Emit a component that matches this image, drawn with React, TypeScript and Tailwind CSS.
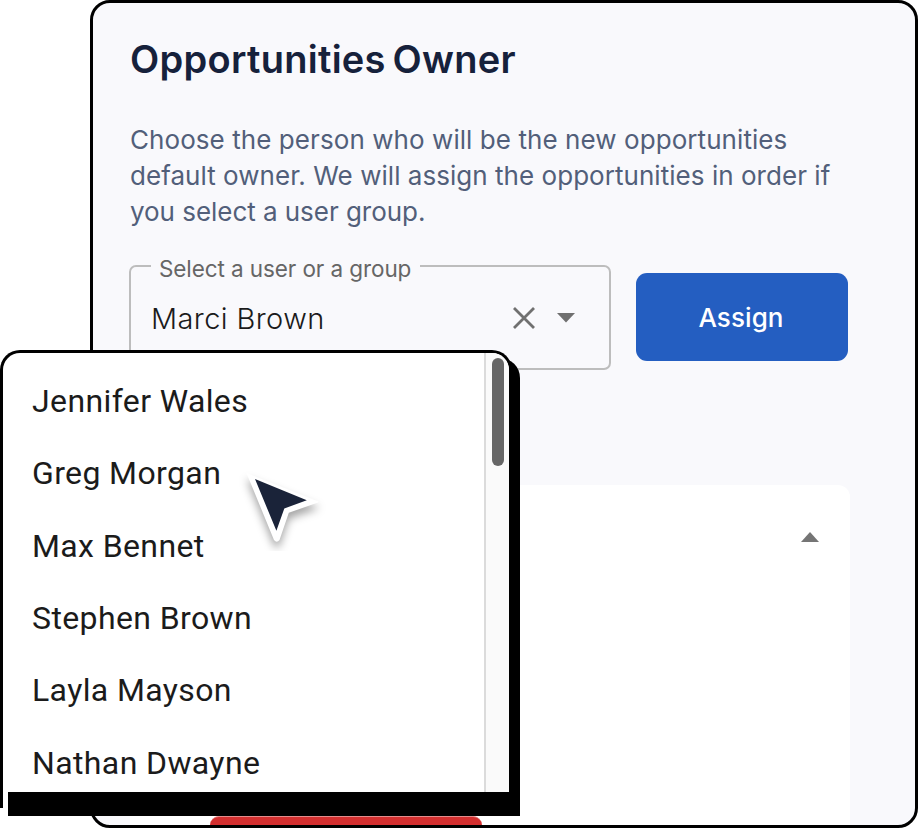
const people = [
  "Jennifer Wales",
  "Greg Morgan",
  "Max Bennet",
  "Stephen Brown",
  "Layla Mayson",
  "Nathan Dwayne",
];

function SelectField() {
  return (
    <fieldset className="-mt-[11px] h-[116px] w-[482px] min-w-0 rounded-[7px] border-2 border-[#bdbdbd] pl-[20px]">
      <legend className="h-[24px] w-[269px] pl-[8px] text-[22.5px] leading-[24px] whitespace-nowrap text-[#666666]">
        <span className="inline-block pt-[3px] tracking-[-0.09px]">Select a user or a group</span>
      </legend>
      <div className="mt-[10px] flex h-[60px] items-center">
        <span className="w-[362px] pt-[1px] text-[29px] leading-[36px] font-light tracking-[0.4px] text-[#1b1b1b]">
          Marci Brown
        </span>
        <svg className="h-[22px] w-[22px]" viewBox="0 0 22 22" fill="none" stroke="#707070" strokeWidth="2.8">
          <path d="M1 1 21 21M21 1 1 21" />
        </svg>
        <svg className="ml-[22px] h-[10px] w-[18px]" viewBox="0 0 18 10" fill="#707070">
          <path d="M0 0H18L9 9.5Z" />
        </svg>
      </div>
    </fieldset>
  );
}

function Cursor() {
  return (
    <svg className="absolute top-[462px] left-[236px] h-[89px] w-[96px]" viewBox="236 462 96 89">
      <path
        className="drop-shadow-[0_6px_4px_rgba(0,0,0,0.35)]"
        d="M246.500 473 318.500 501.500Q319 502 318 502.500L288.800 512.700 279.500 540Q276.700 543.500 274 540Z"
        fill="#fff"
      />
      <path d="M255 479 306.800 500.300 284.300 508.500 276.400 530.800Z" fill="#1a2339" />
    </svg>
  );
}

function Dropdown() {
  return (
    <div className="absolute top-[350px] left-0 h-[466px] w-[520px]">
      <div className="absolute top-[8px] left-[8px] h-[458px] w-[512px] rounded-tr-[20px] bg-black" />
      <div className="absolute top-0 left-0 flex h-[458px] w-[512px] overflow-hidden rounded-t-[20px] border-x-[3px] border-t-[3px] border-black bg-white">
        <ul className="flex w-[481px] flex-col pt-[12px] pl-[29px] font-[Roboto,sans-serif] text-[32px] tracking-[0.38px] text-[#1b1b1b]">
          {people.map((name) => (
            <li key={name} className="h-[72.35px] shrink-0 leading-[72px] whitespace-nowrap">
              {name}
            </li>
          ))}
        </ul>
        <div className="flex flex-1 justify-center border-l-2 border-[#dbdbdb] bg-[#fafafa] pt-[5px] pl-[1px]">
          <div className="h-[108px] w-[12px] rounded-full bg-[#666666]" />
        </div>
      </div>
      <div className="absolute bottom-0 left-[8px] h-[24px] w-[512px] bg-black" />
    </div>
  );
}

export default function App() {
  return (
    <div className="relative flex h-[828px] w-[918px] overflow-hidden bg-white pl-[90px] font-[Inter,sans-serif]">
      <main className="flex h-[828px] w-[828px] flex-col overflow-hidden rounded-[20px] border-[3px] border-black bg-[#f9f9fc] pl-[37px]">
        <h1 className="mt-[32px] h-[48px] text-[38px] leading-[48px] font-semibold tracking-[0.28px] [word-spacing:-3px] whitespace-nowrap text-[#16213b]">
          Opportunities Owner
        </h1>
        <p className="mt-[39px] text-[26px] leading-[36px] whitespace-nowrap text-[#525f7a]">
          <span className="block tracking-[0.07px]">Choose the person who will be the new opportunities</span>
          <span className="block tracking-[0.04px]">default owner. We will assign the opportunities in order if</span>
          <span className="block tracking-[-0.04px]">you select a user group.</span>
        </p>
        <div className="-ml-[1px] mt-[35px] flex items-start">
          <SelectField />
          <button className="mt-[8px] ml-[25px] h-[88px] w-[212px] rounded-[11px] bg-[#245ec1] pr-[2px] text-[26px] font-medium tracking-[0.1px] text-white">
            Assign
          </button>
        </div>
        <section className="mt-[115px] flex h-[340px] w-[720px] shrink-0 flex-col rounded-t-[12px] bg-white">
          <svg className="mt-[47px] mr-[31px] h-[10px] w-[18px] self-end" viewBox="0 0 18 10" fill="#757575">
            <path d="M0 10H18L9 0Z" />
          </svg>
          <div className="mt-auto ml-[80px] h-[9px] w-[272px] rounded-t-[12px] border-t border-[#e58c8c] bg-[#d32f2f]" />
        </section>
      </main>
      <Dropdown />
      <Cursor />
    </div>
  );
}
